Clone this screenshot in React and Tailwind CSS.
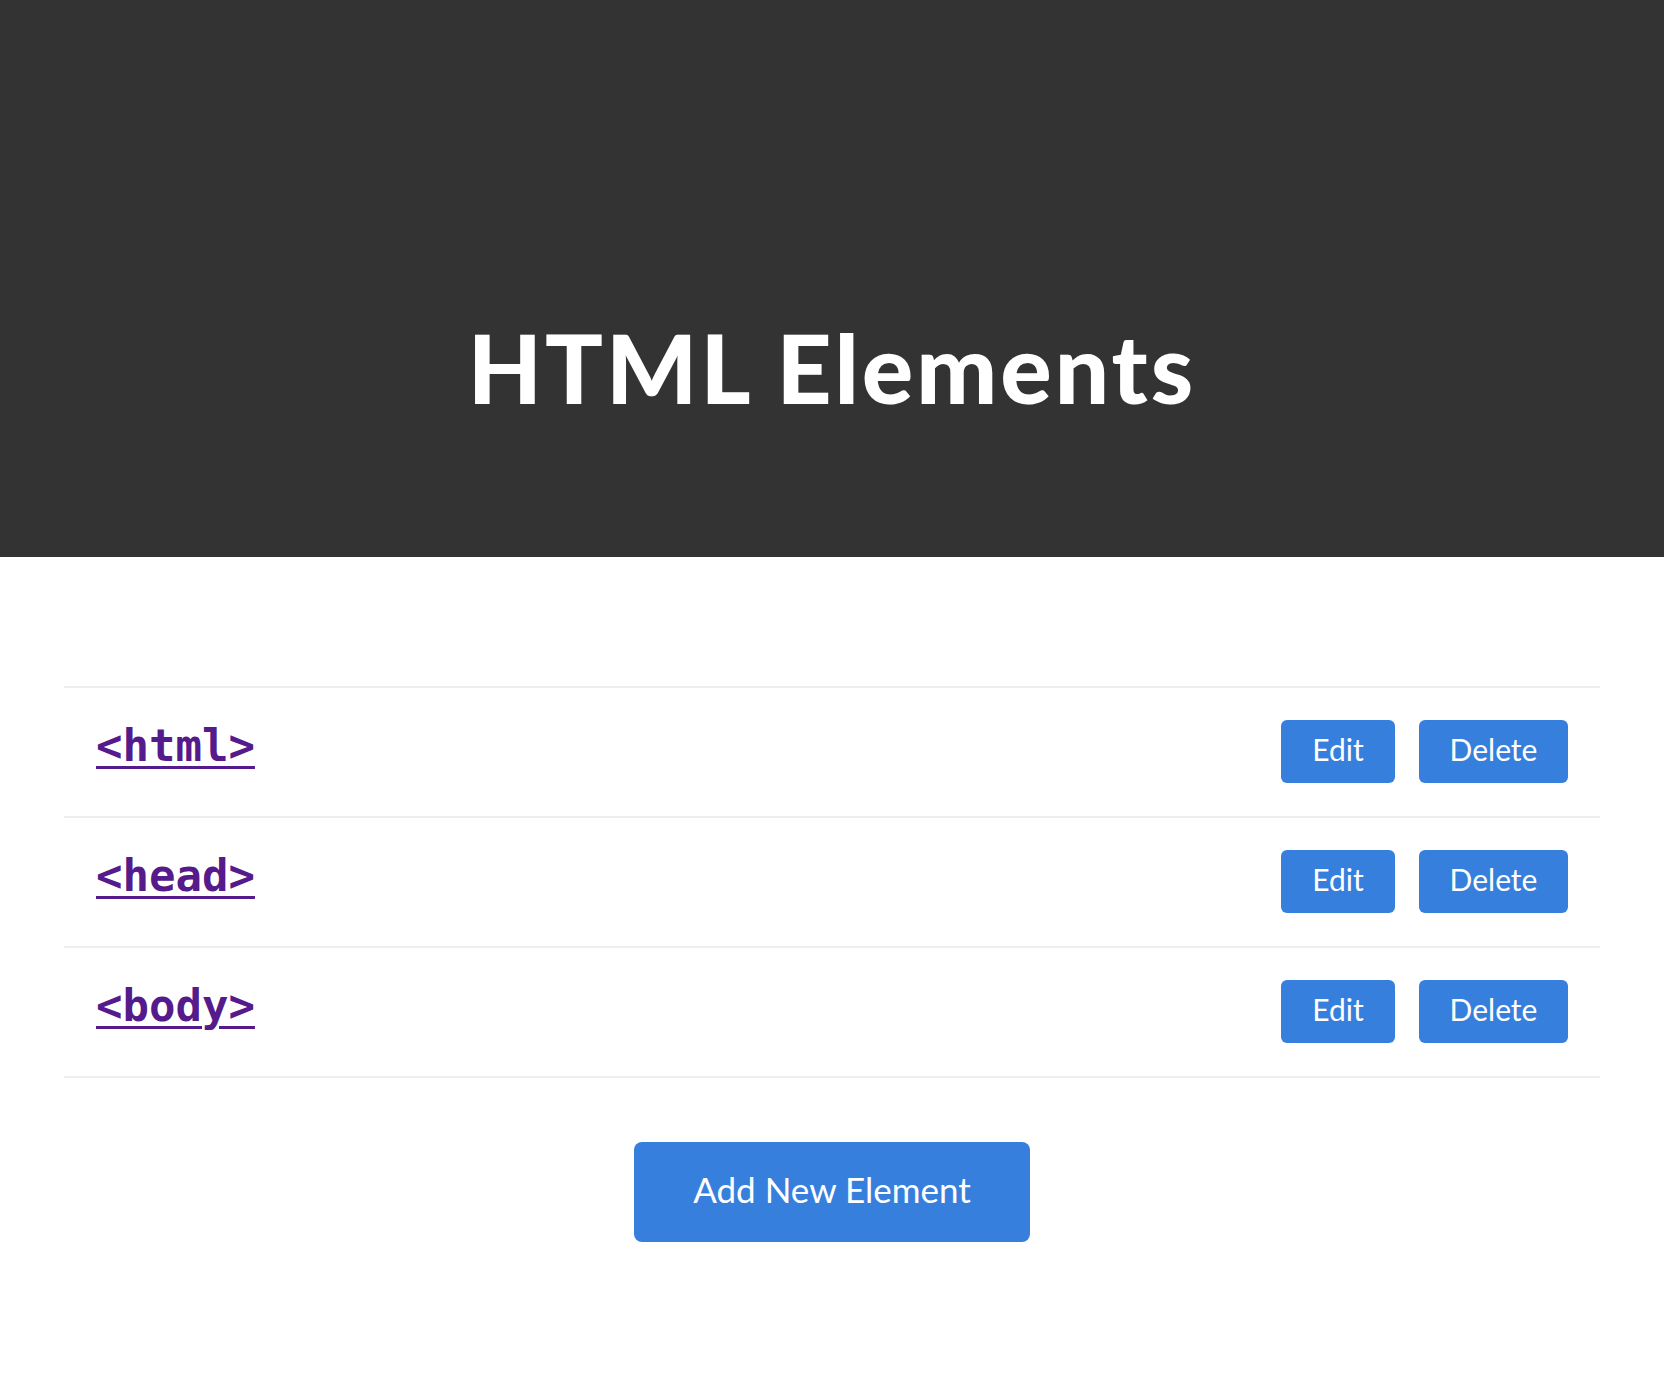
import React from "react";

const items = ["<html>", "<head>", "<body>"];

export default function App() {
  return (
    <div className="min-h-[1396px] bg-white" style={{ fontFamily: "Lato, 'Open Sans', sans-serif" }}>
      <header className="h-[557px] bg-[#333333] pt-[319px]">
        <h1 className="text-center text-[96px] font-black leading-none tracking-[3px] text-white" style={{ fontFamily: "Lato, sans-serif" }}>
          HTML Elements
        </h1>
      </header>
      <main className="px-[64px] pt-[129px]">
        <ul className="border-b-2 border-[#eeeeee]">
          {items.map((t) => (
            <li key={t} className="flex h-[130px] items-center justify-between border-t-2 border-[#eeeeee] px-[32px]">
              <a
                href="#"
                className="mb-[12px] text-[44px] font-bold text-[#551a8b] underline decoration-[3px] underline-offset-[5px]"
                style={{ fontFamily: "'DejaVu Sans Mono', monospace" }}
              >
                {t}
              </a>
              <div className="mb-[2px] flex gap-[24px]">
                <button className="flex h-[63px] w-[114px] items-center justify-center rounded-[6px] bg-[#377fdd] pb-[3px] text-[30px] text-white">
                  Edit
                </button>
                <button className="flex h-[63px] w-[149px] items-center justify-center rounded-[6px] bg-[#377fdd] pb-[3px] text-[30px] text-white">
                  Delete
                </button>
              </div>
            </li>
          ))}
        </ul>
        <div className="flex justify-center pt-[64px]">
          <button className="flex h-[100px] w-[396px] items-center justify-center rounded-[8px] bg-[#377fdd] pb-[6px] text-[35px] text-white">
            Add New Element
          </button>
        </div>
      </main>
    </div>
  );
}
